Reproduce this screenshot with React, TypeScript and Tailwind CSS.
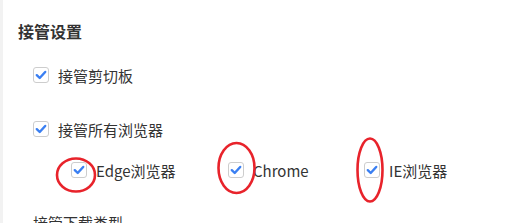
import React from "react";

function Box() {
  return (
    <span className="w-[16px] h-[16px] shrink-0 rounded-[3px] border border-[#cdcdcd] bg-white flex items-center justify-center">
      <svg width="12" height="12" viewBox="0 0 12 12">
        <path d="M1.8 6.2 L4.7 9 L10.2 3" fill="none" stroke="#3a7ff2" strokeWidth="2.4" strokeLinecap="round" strokeLinejoin="round" />
      </svg>
    </span>
  );
}

function Check({ label, className = "" }: { label: string; className?: string }) {
  return (
    <div className={`flex items-center h-[22px] ${className}`}>
      <Box />
      <span className="ml-[9px] text-[15px] leading-none text-[#333]">{label}</span>
    </div>
  );
}

export default function App() {
  return (
    <div
      className="relative flex w-[507px] h-[223px] overflow-hidden bg-white"
      style={{ fontFamily: '"Microsoft YaHei", "Noto Sans CJK SC", "Noto Sans", sans-serif' }}
    >
      <div className="w-[3px] bg-[#f2f2f2]" />
      <div className="flex-1 pl-[15px]">
        <div className="mt-[21px] h-[20px] flex items-center text-[16px] font-semibold text-[#333]">接管设置</div>

        <div className="mt-[23px] pl-[15px]">
          <Check label="接管剪切板" />
        </div>

        <div className="mt-[32px] pl-[15px]">
          <Check label="接管所有浏览器" />
        </div>

        <div className="mt-[19px] pl-[53px] flex">
          <Check label="Edge浏览器" className="w-[157px]" />
          <Check label="Chrome" className="w-[136px]" />
          <Check label="IE浏览器" />
        </div>

        <div className="mt-[31px] pl-[15px] h-[22px] flex items-center text-[15px] text-[#333]">接管下载类型</div>
      </div>

      <svg className="absolute inset-0 pointer-events-none" width="507" height="223">
        <ellipse cx="76" cy="175" rx="19" ry="16.5" fill="none" stroke="#e8232b" strokeWidth="2.6" />
        <ellipse cx="236.5" cy="168" rx="18" ry="25" fill="none" stroke="#e8232b" strokeWidth="2.6" />
        <ellipse cx="370" cy="170" rx="12.5" ry="31.5" fill="none" stroke="#e8232b" strokeWidth="2.6" />
      </svg>
    </div>
  );
}
